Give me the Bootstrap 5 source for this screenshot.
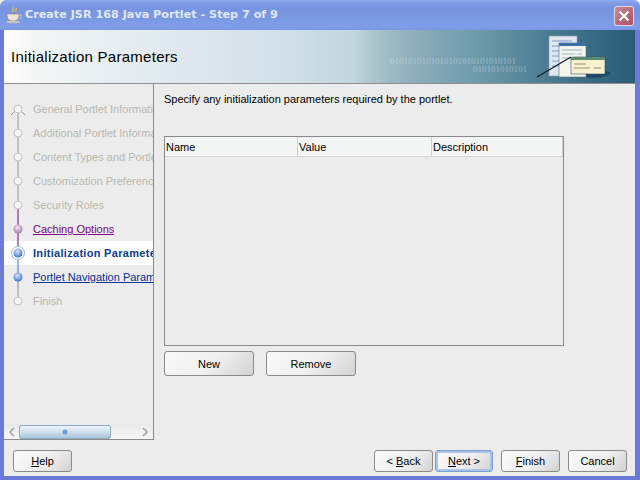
<!DOCTYPE html>
<html lang="en">
<head>
  <meta charset="UTF-8">
  <meta name="viewport" content="width=device-width, initial-scale=1.0">
  <title>Create JSR 168 Java Portlet</title>
  <link href="https://cdn.jsdelivr.net/npm/bootstrap@5.3.0/dist/css/bootstrap.min.css" rel="stylesheet">
  <style>
    html, body { margin: 0; height: 480px; overflow: hidden; }
    body {
      font-family: "Liberation Sans", Arial, sans-serif;
      font-size: 11px;
      line-height: 14px;
      color: #000;
      background: #ececec;
    }
    .dialog {
      width: 640px;
      height: 480px;
      background: #6b79d9;
      border-radius: 7px 7px 0 0;
      overflow: hidden;
    }
    .titlebar {
      height: 30px;
      background: linear-gradient(#8fabf0 0, #819de8 3px, #7894e0 8px, #7b97e2 17px, #809dea 27px, #7a96e2 30px);
      padding: 0 6px 0 5px;
    }
    .titlebar .caption {
      font-family: "DejaVu Sans", sans-serif;
      font-weight: 700;
      font-size: 11.2px;
      color: #dfe8fa;
      margin-left: 2px;
    }
    .btn-close-xp {
      width: 20px;
      height: 20px;
      background: linear-gradient(135deg, #c98a97, #a8505f);
      border: 1px solid #e6d8e4;
      border-radius: 3px;
      padding: 0;
      margin-top: 1px;
    }
    .content { margin: 0 5px 4px 4px; height: 446px; background: #ececec; }
    .banner {
      height: 54px;
      border-bottom: 1px solid #8f8f8f;
      padding-left: 7px;
      background: linear-gradient(90deg, #fff 0, #f5f6f6 30px, #e8eff2 100px, #dfe8ee 180px, #cfdfe6 290px, #c2d5dc 349px, #a0bcc6 383px, #8aacb8 416px, #6a97a8 483px, #4f8095 533px, #2d607a 616px, #2a5d76 632px);
    }
    .banner h1 { font-size: 15px; font-weight: 400; margin: 0; line-height: 54px; letter-spacing: .27px; }
    .banner .art {
      color: rgba(235, 242, 245, .38);
      font-family: "Liberation Serif", serif;
      font-size: 9px;
      line-height: 8px;
      width: 140px;
      margin: 16px 5px 0 0;
      white-space: nowrap;
    }
    .art .second { padding-left: 83px; }
    .banner-icon { margin-right: 24px; }
    .main { height: 356px; }
    .train {
      width: 150px;
      border-right: 1px solid #8a8a8a;
      border-bottom: 1px solid #8a8a8a;
      overflow: hidden;
    }
    .steps { padding-top: 13px; }
    .step { height: 24px; white-space: nowrap; overflow: hidden; color: #b9b9b1; font-size: 11px; padding-left: 2px; }
    .step svg { flex: none; margin-right: 3px; }
    .step span, .step a { min-width: 0; overflow: hidden; }
    .step a { color: inherit; }
    .step.visited { color: #800080; }
    .step.current { background: #fff; color: #0b3d91; font-weight: 700; letter-spacing: .3px; }
    .step.next { color: #003399; }
    .hscroll { height: 15px; background: linear-gradient(#e8e9e9, #f5f6f5); padding: 0 4px; }
    .hscroll .thumb {
      width: 92px;
      height: 14px;
      margin-left: 3px;
      border: 1px solid #8eaec8;
      border-radius: 2px;
      background: linear-gradient(#eef4f8, #d5e4ee 40%, #a9c6dc);
    }
    .pane { padding: 8px 71px 0 10px; }
    .pane p { margin: 0 0 30px; height: 14px; }
    .grid-box { height: 210px; width: 400px; border: 1px solid #8a8a8a; background: #ececec; }
    .grid-head { height: 20px; background: #f4f6f5; border-bottom: 1px solid #d4d4d4; }
    .grid-head div { padding: 3px 1px; border-right: 1px solid #d0d0d0; }
    .grid-actions { gap: 12px; margin-top: 5px; }
    .xp-btn {
      --bs-btn-padding-x: 0;
      --bs-btn-padding-y: 0;
      --bs-btn-font-size: 11px;
      --bs-btn-line-height: 14px;
      --bs-btn-color: #000;
      --bs-btn-border-color: #8b8b8b;
      --bs-btn-border-radius: 3px;
      background: linear-gradient(135deg, #fafafa 0, #efefef 55%, #d2d2d2 100%);
      font-family: inherit;
    }
    .xp-btn.wide { width: 90px; height: 25px; }
    .xp-btn.small { width: 59px; height: 22px; }
    .xp-btn.default { width: 58px; margin-left: 2px; border-color: #7f9ed0; box-shadow: inset 0 0 0 2px #a9c4ea; }
    .xp-btn u { text-underline-offset: 1px; }
    .footer { padding: 10px 8px 0 9px; height: 36px; }
  </style>
</head>

<body>
  <div class="dialog d-flex flex-column">

    <!-- title bar -->
    <div class="titlebar d-flex align-items-center">
      <svg width="18" height="18" viewBox="0 0 18 18">
        <path d="M8 1c2 2-2 3 0 5M11 2c1 2-1 2 0 4" stroke="#e6b93c" stroke-width="1.3" fill="none"/>
        <path d="M2 8h12c0 5-2 7-6 7s-6-2-6-7z" fill="#e8e4dc" stroke="#8a8474" stroke-width=".6"/>
        <path d="M14 9h2v3h-2.500" stroke="#c8c4ba" fill="none"/>
        <ellipse cx="8" cy="16" rx="7" ry="1.300" fill="#c9c5bc"/>
      </svg>
      <span class="caption flex-grow-1">Create JSR 168 Java Portlet - Step 7 of 9</span>
      <button class="btn-close-xp d-flex align-items-center justify-content-center" aria-label="Close">
        <svg width="12" height="12" viewBox="0 0 12 12"><path d="M1.500 1.500l9 9M10.500 1.500l-9 9" stroke="#fff" stroke-width="2.200"/></svg>
      </button>
    </div>

    <div class="content d-flex flex-column">

      <!-- banner -->
      <div class="banner d-flex align-items-center">
        <h1 class="flex-grow-1">Initialization Parameters</h1>
        <div class="art">
          <div>0101010101010101010101010101</div>
          <div class="second">010101010101</div>
        </div>
        <svg class="banner-icon" width="76" height="48" viewBox="0 0 76 48">
          <path d="M40 40c12-3 30-4 36 0-6 6-26 7-36 0z" fill="#1f4a60"/>
          <rect x="14" y="3" width="28" height="40" fill="#dfe6ef" stroke="#8a9aa8" stroke-width=".6"/>
          <path d="M17 8h20M17 13h22M17 18h20M17 23h18M17 28h20M17 33h16" stroke="#7d9dc8"/>
          <rect x="24" y="10" width="27" height="34" fill="#f4f4ec" stroke="#53708a" stroke-width=".6"/>
          <rect x="24" y="10" width="27" height="3" fill="#3c6fa8"/>
          <path d="M27 17h20M27 21h20M27 25h14" stroke="#9ab4cc"/>
          <rect x="36" y="24" width="34" height="17" fill="#f6f2cf" stroke="#34506a" stroke-width=".6"/>
          <rect x="36" y="24" width="34" height="3" fill="#5c8a6c"/>
          <path d="M39 31h12M39 35h16M59 35h7" stroke="#a08a70"/>
          <path d="M2 44L36 24" stroke="#1a2228" stroke-width="1.400"/>
          <path d="M36 24l7-4" stroke="#e8eef2" stroke-width="1.400"/>
        </svg>
      </div>

      <div class="main d-flex">
        <!-- train -->
        <div class="train d-flex flex-column">
          <div class="steps flex-grow-1">
            <div class="step d-flex align-items-center">
              <svg width="24" height="24"><path d="M12 12v12M5 18l7-7 7 7" stroke="#9a9a94" fill="none"/><circle cx="12" cy="12" r="4" fill="#f6f6f4" stroke="#c4c4bc"/></svg>
              <span>General Portlet Information</span>
            </div>
            <div class="step d-flex align-items-center">
              <svg width="24" height="24"><path d="M12 0v24" stroke="#9a9a94"/><circle cx="12" cy="12" r="4" fill="#f6f6f4" stroke="#c4c4bc"/></svg>
              <span>Additional Portlet Information</span>
            </div>
            <div class="step d-flex align-items-center">
              <svg width="24" height="24"><path d="M12 0v24" stroke="#9a9a94"/><circle cx="12" cy="12" r="4" fill="#f6f6f4" stroke="#c4c4bc"/></svg>
              <span>Content Types and Portlet Modes</span>
            </div>
            <div class="step d-flex align-items-center">
              <svg width="24" height="24"><path d="M12 0v24" stroke="#9a9a94"/><circle cx="12" cy="12" r="4" fill="#f6f6f4" stroke="#c4c4bc"/></svg>
              <span>Customization Preferences</span>
            </div>
            <div class="step d-flex align-items-center">
              <svg width="24" height="24"><path d="M12 0v12" stroke="#9a9a94"/><path d="M12 12v12" stroke="#800080"/><circle cx="12" cy="12" r="4" fill="#f6f6f4" stroke="#c4c4bc"/></svg>
              <span>Security Roles</span>
            </div>
            <div class="step visited d-flex align-items-center">
              <svg width="24" height="24"><defs><radialGradient id="p" cx=".45" cy=".35" r=".7"><stop offset="0" stop-color="#f2e6f0"/><stop offset="1" stop-color="#a070a8"/></radialGradient></defs><path d="M12 0v24" stroke="#800080"/><circle cx="12" cy="12" r="4.500" fill="url(#p)"/></svg>
              <a href="#">Caching Options</a>
            </div>
            <div class="step current d-flex align-items-center">
              <svg width="24" height="24"><defs><radialGradient id="b" cx=".45" cy=".35" r=".7"><stop offset="0" stop-color="#dfeafa"/><stop offset="1" stop-color="#2f68cf"/></radialGradient></defs><path d="M12 0v12" stroke="#800080"/><path d="M12 12v12" stroke="#3a6fd0"/><circle cx="12" cy="12" r="6.500" fill="#fff" stroke="#9db8dc"/><circle cx="12" cy="12" r="4.500" fill="url(#b)"/></svg>
              <span>Initialization Parameters</span>
            </div>
            <div class="step next d-flex align-items-center">
              <svg width="24" height="24"><path d="M12 0v12" stroke="#3a6fd0"/><path d="M12 12v12" stroke="#8a8a84"/><circle cx="12" cy="12" r="4.500" fill="url(#b)"/></svg>
              <a href="#">Portlet Navigation Parameters</a>
            </div>
            <div class="step d-flex align-items-center">
              <svg width="24" height="24"><path d="M12 0v12" stroke="#9a9a94"/><circle cx="12" cy="12" r="4" fill="#f6f6f4" stroke="#c4c4bc"/></svg>
              <span>Finish</span>
            </div>
          </div>
          <div class="hscroll d-flex align-items-center">
            <svg width="8" height="10" viewBox="0 0 8 10"><path d="M6 1L2 5l4 4" stroke="#a0a0a0" stroke-width="1.500" fill="none"/></svg>
            <div class="thumb d-flex align-items-center justify-content-center">
              <svg width="6" height="6"><circle cx="3" cy="3" r="2.500" fill="#6f97dc"/></svg>
            </div>
            <svg class="ms-auto" width="8" height="10" viewBox="0 0 8 10"><path d="M2 1l4 4-4 4" stroke="#a0a0a0" stroke-width="1.500" fill="none"/></svg>
          </div>
        </div>

        <!-- parameters -->
        <div class="pane flex-grow-1">
          <p>Specify any initialization parameters required by the portlet.</p>
          <div class="grid-box">
            <div class="grid-head d-flex">
              <div style="width: 133px">Name</div>
              <div style="width: 134px">Value</div>
              <div style="width: 131px">Description</div>
            </div>
          </div>
          <div class="grid-actions d-flex">
            <button class="btn xp-btn wide">New</button>
            <button class="btn xp-btn wide">Remove</button>
          </div>
        </div>
      </div>

      <!-- footer buttons -->
      <div class="footer d-flex">
        <button class="btn xp-btn small"><u>H</u>elp</button>
        <div class="ms-auto d-flex">
          <button class="btn xp-btn small">&lt; <u>B</u>ack</button>
          <button class="btn xp-btn small default"><u>N</u>ext &gt;</button>
          <button class="btn xp-btn small ms-2"><u>F</u>inish</button>
          <button class="btn xp-btn small ms-2">Cancel</button>
        </div>
      </div>
    </div>
  </div>
  <script src="https://cdn.jsdelivr.net/npm/bootstrap@5.3.0/dist/js/bootstrap.bundle.min.js"></script>
</body>
</html>
